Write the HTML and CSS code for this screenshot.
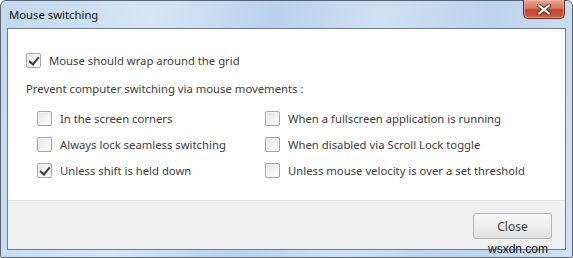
FILE: index.html
```html
<!DOCTYPE html>
<html lang="en">
<head>
    <meta charset="UTF-8">
    <title>Mouse switching</title>
    <link rel="stylesheet" href="styles.css">
</head>
<body>
    <div class="window">
        <!-- Title bar -->
        <div class="titlebar">
            <span class="title">Mouse switching</span>
            <button class="close-x" aria-label="Close">
                <svg width="14" height="11" viewBox="0 0 14 11">
                    <path d="M2 1.5 L12 9.5 M12 1.5 L2 9.5" stroke="#5a2a22" stroke-width="4" stroke-linecap="round"/>
                    <path d="M2 1.5 L12 9.5 M12 1.5 L2 9.5" stroke="#ffffff" stroke-width="2.2" stroke-linecap="round"/>
                </svg>
            </button>
        </div>

        <div class="client">
            <div class="content">
                <label class="opt">
                    <span class="box checked"></span>
                    Mouse should wrap around the grid
                </label>

                <p class="caption">Prevent computer switching via mouse movements :</p>

                <div class="grid">
                    <label class="opt"><span class="box"></span>In the screen corners</label>
                    <label class="opt"><span class="box"></span>When a fullscreen application is running</label>
                    <label class="opt"><span class="box"></span>Always lock seamless switching</label>
                    <label class="opt"><span class="box"></span>When disabled via Scroll Lock toggle</label>
                    <label class="opt"><span class="box checked"></span>Unless shift is held down</label>
                    <label class="opt"><span class="box"></span>Unless mouse velocity is over a set threshold</label>
                </div>
            </div>

            <div class="footer">
                <button class="btn">Close</button>
            </div>
        </div>

        <span class="watermark">wsxdn.com</span>
    </div>
</body>
</html>
```

FILE: styles.css
```css
body {
    margin: 0;
    font-family: "Noto Sans", "Open Sans", sans-serif;
    font-size: 11.3px;
    color: #404040;
}
.window {
    position: relative;
    width: 573px;
    height: 258px;
    box-sizing: border-box;
    border: 1px solid #5a6674;
    border-radius: 6px 6px 2px 2px;
    padding: 0 6px 7px 6px;
    background: linear-gradient(100deg, #c2d8ef 0%, #d6e6f6 25%, #b9d1ec 45%, #cfe0f3 62%, #bcd3ec 80%, #d0e2f5 100%);
    display: flex;
    flex-direction: column;
}
.titlebar {
    height: 27px;
    display: flex;
    justify-content: space-between;
    align-items: flex-start;
}
.title {
    margin-top: 6px;
    padding-left: 2px;
    color: #111;
}
.close-x {
    margin-top: -1px;
    margin-right: 1px;
    width: 42px;
    height: 19px;
    padding: 0;
    border: 1px solid #5d2e27;
    border-top: none;
    border-radius: 0 0 5px 5px;
    background: linear-gradient(#e9a898 0%, #d7765f 45%, #c2412b 55%, #d35d43 100%);
    display: flex;
    align-items: center;
    justify-content: center;
    box-shadow: inset 0 0 0 1px rgba(255, 200, 190, 0.5);
}
.client {
    flex: 1;
    border: 1px solid #6b7d93;
    background: #fff;
    display: flex;
    flex-direction: column;
}
.content {
    height: 171px;
    padding: 23px 0 0 18px;
    box-sizing: border-box;
}
.opt {
    display: flex;
    align-items: center;
    gap: 8px;
    height: 16px;
}
.box {
    width: 15px;
    height: 15px;
    box-sizing: border-box;
    border: 1px solid #a6a6a6;
    border-radius: 2px;
    background: linear-gradient(135deg, #e4e4e4, #f5f5f5 60%, #ffffff);
    box-shadow: inset 0 0 0 1px #f4f4f4;
    position: relative;
}
.box.checked::after {
    content: "";
    position: absolute;
    left: 4px;
    top: 1px;
    width: 4px;
    height: 8px;
    border: solid #3a3a3a;
    border-width: 0 2px 2px 0;
    transform: rotate(40deg);
}
.caption {
    margin: 13px 0 0 0;
    height: 16px;
    line-height: 16px;
}
.grid {
    margin: 13px 0 0 11px;
    display: grid;
    grid-template-columns: 228px 1fr;
    row-gap: 10px;
}
.footer {
    flex: 1;
    border-top: 1px solid #dfdfdf;
    background: #f0f0f0;
    display: flex;
    justify-content: flex-end;
    align-items: flex-start;
    padding: 12px 13px 0 0;
}
.btn {
    width: 79px;
    height: 26px;
    border: 1px solid #b4b4b4;
    border-radius: 3px;
    background: linear-gradient(#f7f7f7, #ededed 50%, #e2e2e2);
    font-family: inherit;
    font-size: 12px;
    color: #404040;
}
.watermark {
    position: absolute;
    right: 24px;
    bottom: 1px;
    font-family: "Liberation Sans", sans-serif;
    font-size: 12px;
    color: #111;
    line-height: 13px;
}
```
